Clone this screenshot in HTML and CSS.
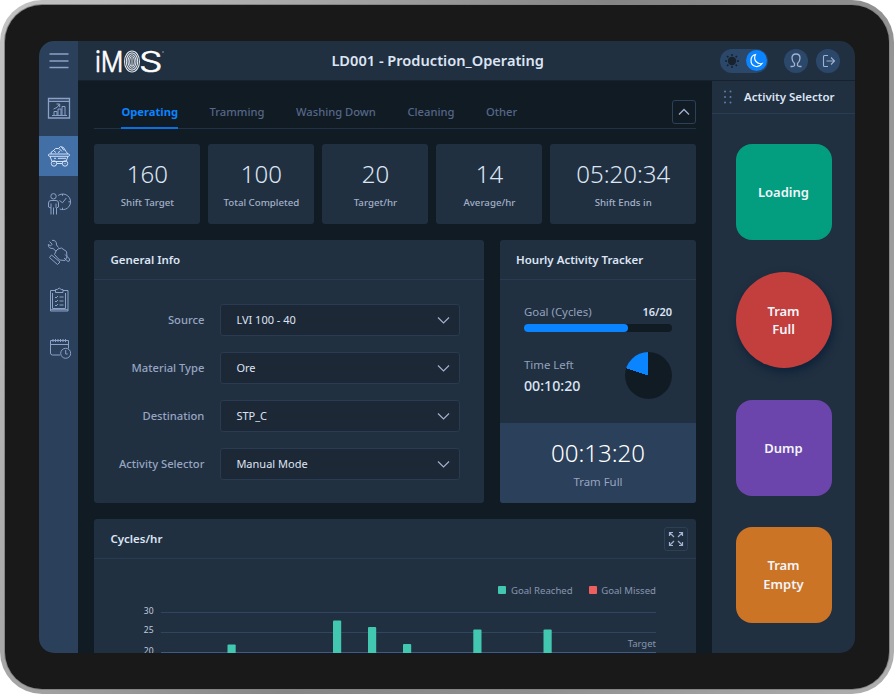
FILE: index.html
```
<!DOCTYPE html>
<html lang="en">

<head>
    <meta charset="utf-8">
    <title>iMOS</title>
    <link rel="stylesheet" href="styles.css">
</head>

<body>
    <div class="tablet">
        <div class="bezel">
            <div class="screen">
                <nav class="sidebar">
                    <a class="menu"><svg width="20" height="20" viewBox="0 0 20 20"><path d="M.5 3h19M.5 10h19M.5 16.500h19" stroke-width="1.500" /></svg></a>
                    <a><svg width="24" height="24" viewBox="0 0 24 24">
                        <path d="M1.500 2.500h21v19.500h-21zM1.500 5.300h21" stroke-width="1.300" />
                        <path d="M5 19.500h15M7 19.500v-4h3v4M11 19.500v-6.500h3v6.500M15 19.500V10.500h3v9M6.500 13q4.500-1 6-5M9.500 8h3.200v3.200" />
                    </svg></a>
                    <a class="active"><svg width="24" height="24" viewBox="0 0 24 24">
                        <path d="M1.500 11q0-1 1-1h19q1 0 1 1t-1 1.300h-19q-1 0-1-1.300zM3 12.300l2 5.200h14l2-5.200M4 10q-.5-2.500 2-3l2.500-2.500h3l2-2 3 1 2.500 4 2 2.500M7 7l2 1.500M12 4.500l3 3M14.500 3l2.500 3.500M11 8.500l2-1" />
                        <circle cx="7" cy="19.500" r="2.700" /><circle cx="18" cy="19.500" r="2.700" />
                        <path d="M9.700 19.500h5.600M7 14.300h2M11 14.300h8M6.600 19.500h.8M17.600 19.500h.8" />
                    </svg></a>
                    <a><svg width="24" height="24" viewBox="0 0 24 24">
                        <circle cx="6.500" cy="4.300" r="2.700" />
                        <path d="M4 22.500v-6.500l-2.500-1V11q0-2.500 2.500-2.500h5q2.500 0 2.500 2.500v4l-2 1v6.500M6.500 15.500v7M4 11.500v4.500M9 11.500v4.500" />
                        <path d="M11.200 3.500A7.800 7.800 0 1 1 12.700 17M15.500 2v1.800M23.200 9.800h-1.800M15.500 17.500v-1.800M12.500 8.500l3 2.300 3.800-4.800" />
                    </svg></a>
                    <a><svg width="24" height="26" viewBox="0 0 24 26">
                        <path d="M2.500 2.500l2.700 2.700-1.700 1.700-2.200-1.500q0 4.600 4.700 4l3.200 3M5 1.300q4.800-.3 4.500 4.700l2 2.500" />
                        <path d="M9 12l-1.500 3.500 5 5.500 5.500.5 2-3.500-.5-5.500-5-3.500-3.500 1zM4.500 16l8.500 7-2.500 2.500L2.500 18.500zM18 15.500l4.500 4.500q.5 2.500-1.500 2.500L17 19" />
                    </svg></a>
                    <a><svg width="24" height="26" viewBox="0 0 24 26">
                        <path d="M8.500 3.500H3.500v20.500h17.500V3.500h-5M8.500 2.500h1.700q2-3 4 0h1.800v3h-7.500zM5.500 6v15.500h13V6M3.500 22.700h17.500" />
                        <path d="M8 10l1 1 2-2M12.500 10h4M8 14l1 1 2-2M12.500 14h4M8 18l1 1 2-2M12.500 18h4" />
                    </svg></a>
                    <a><svg width="24" height="24" viewBox="0 0 24 24">
                        <path d="M13 19h-7.500q-2 0-2-2V4.500h18v8M3.500 8.500h18M6 3v3M8.500 3v3M11 3v3M13.500 3v3M16 3v3M18.500 3v3" />
                        <circle cx="18.700" cy="17.300" r="5" /><path d="M18.700 14v4h2" />
                    </svg></a>
                </nav>

                <div class="page">
                    <header class="topbar">
                        <svg class="logo" width="72" height="36" viewBox="0 0 72 36">
                            <text x="0" y="29" textLength="28.500" lengthAdjust="spacingAndGlyphs">iM</text>
                            <g class="print">
                                <ellipse cx="37" cy="18.500" rx="7.500" ry="10.500" />
                                <ellipse cx="37" cy="18.500" rx="5.700" ry="8.600" />
                                <ellipse cx="37" cy="18.500" rx="4" ry="6.700" />
                                <ellipse cx="37" cy="18.500" rx="2.300" ry="4.800" />
                                <path d="M37 15v8" />
                            </g>
                            <text x="44" y="29" textLength="23.500" lengthAdjust="spacingAndGlyphs">S</text>
                            <path d="M67 9h2" stroke="#8796ad" />
                        </svg>
                        <h1>LD001 - Production_Operating</h1>
                        <div class="tools">
                            <div class="toggle">
                                <svg width="24" height="24" viewBox="0 0 24 24">
                                    <circle cx="12" cy="12" r="4.200" fill="#17222d" stroke="none" />
                                    <path d="M12 5v2M12 17v2M5 12h2M17 12h2M7 7l1.400 1.400M15.600 15.600l1.400 1.400M17 7l-1.400 1.400M8.400 15.600L7 17" stroke="#17222d" stroke-width="1.500" />
                                </svg>
                                <span class="knob"><svg width="21" height="21" viewBox="0 0 21 21"><path d="M9.500 4.500Q5 5.500 5 10.500t5 6q3.500.5 6-3-3.500 1-6-2t-.5-7z" stroke="#fff" stroke-width="1.200" /></svg></span>
                            </div>
                            <span class="round"><svg width="24" height="24" viewBox="0 0 24 24"><path d="M6.500 17.500h1.500q2 0 2.500-1v-2q-2.500-2-2.500-5.500Q8 5 12 5T16 9q0 3.500-2.500 5.500v2q.5 1 2.500 1h1.500" stroke-width="1.300" /></svg></span>
                            <span class="round"><svg width="24" height="24" viewBox="0 0 24 24"><path d="M12 6.500H8.500q-1 0-1 1v9q0 1 1 1H12M10.500 12h8M15 8.500l3.500 3.500-3.500 3.500" stroke-width="1.100" /></svg></span>
                        </div>
                    </header>

                    <div class="body">
                        <main>
                            <div class="tabs">
                                <a class="current">Operating</a>
                                <a>Tramming</a>
                                <a>Washing Down</a>
                                <a>Cleaning</a>
                                <a>Other</a>
                                <button class="box-btn"><svg width="14" height="14" viewBox="0 0 14 14"><path d="M2 9.500l5-5 5 5" stroke-width="1.300" /></svg></button>
                            </div>

                            <div class="stats">
                                <div class="stat"><b>160</b><span>Shift Target</span></div>
                                <div class="stat"><b>100</b><span>Total Completed</span></div>
                                <div class="stat"><b>20</b><span>Target/hr</span></div>
                                <div class="stat"><b>14</b><span>Average/hr</span></div>
                                <div class="stat wide"><b>05:20:34</b><span>Shift Ends in</span></div>
                            </div>

                            <div class="row">
                                <section class="card info">
                                    <h2>General Info</h2>
                                    <div class="fields">
                                        <label>Source</label>
                                        <div class="select">LVI 100 - 40<svg width="14" height="14" viewBox="0 0 14 14"><path d="M1 4.500L6.500 10 12 4.500" /></svg></div>
                                        <label>Material Type</label>
                                        <div class="select">Ore<svg width="14" height="14" viewBox="0 0 14 14"><path d="M1 4.500L6.500 10 12 4.500" /></svg></div>
                                        <label>Destination</label>
                                        <div class="select">STP_C<svg width="14" height="14" viewBox="0 0 14 14"><path d="M1 4.500L6.500 10 12 4.500" /></svg></div>
                                        <label>Activity Selector</label>
                                        <div class="select">Manual Mode<svg width="14" height="14" viewBox="0 0 14 14"><path d="M1 4.500L6.500 10 12 4.500" /></svg></div>
                                    </div>
                                </section>

                                <section class="card tracker">
                                    <h2>Hourly Activity Tracker</h2>
                                    <div class="goal">
                                        <div class="goal-text"><span>Goal (Cycles)</span><b>16/20</b></div>
                                        <div class="progress"><div style="width: 70.5%"></div></div>
                                        <div class="time">
                                            <div><span>Time Left</span><b>00:10:20</b></div>
                                            <i class="pie"></i>
                                        </div>
                                    </div>
                                    <div class="elapsed"><b>00:13:20</b><span>Tram Full</span></div>
                                </section>
                            </div>

                            <section class="card cycles">
                                <h2>Cycles/hr
                                    <button class="box-btn"><svg width="16" height="16" viewBox="0 0 16 16"><path d="M6 6L1.500 1.500M1.500 5V1.500H5M10 6l4.500-4.500M11 1.500h3.500V5M6 10l-4.500 4.500M1.500 11v3.500H5M10 10l4.500 4.500M14.500 11v3.500H11" stroke-width="1.200" /></svg></button>
                                </h2>
                                <div class="legend"><span><i class="reached"></i>Goal Reached</span><span><i class="missed"></i>Goal Missed</span></div>
                                <svg class="chart" width="520" height="48" viewBox="0 0 520 48">
                                    <g class="grid"><path d="M25 6.500h495M25 26.500h495" /><path class="target" d="M25 46.500h495" /></g>
                                    <g class="axis"><text x="17.500" y="8">30</text><text x="17.500" y="27">25</text><text x="17.500" y="48">20</text></g>
                                    <g class="bars">
                                        <rect x="91.500" y="38.500" width="8.200" height="20" rx="1" />
                                        <rect x="197" y="14.500" width="8.200" height="50" rx="1" />
                                        <rect x="232" y="21" width="8.200" height="50" rx="1" />
                                        <rect x="267" y="38" width="8.200" height="20" rx="1" />
                                        <rect x="337.300" y="23.400" width="8.200" height="50" rx="1" />
                                        <rect x="407.500" y="23.400" width="8.200" height="50" rx="1" />
                                    </g>
                                    <text class="label" x="520" y="41">Target</text>
                                </svg>
                            </section>
                        </main>

                        <aside>
                            <h3><svg width="10" height="14" viewBox="0 0 10 14"><path d="M2 1.500h.01M7.500 1.500h.01M2 7h.01M7.500 7h.01M2 12.500h.01M7.500 12.500h.01" /></svg>Activity Selector</h3>
                            <button class="loading">Loading</button>
                            <button class="full">Tram<br>Full</button>
                            <button class="dump">Dump</button>
                            <button class="empty">Tram<br>Empty</button>
                        </aside>
                    </div>
                </div>
            </div>
        </div>
    </div>
</body>

</html>
```
FILE: styles.css
```
* {
    box-sizing: border-box;
}

body {
    margin: 0;
    background: #fff;
    font-family: "Noto Sans", sans-serif;
    font-size: 11px;
    color: #dde4f3;
}

h1, h2, h3 {
    margin: 0;
    font-weight: 600;
}

button {
    padding: 0;
    border: 0;
    font: inherit;
}

svg {
    fill: none;
    stroke: #a3b0cf;
    flex-shrink: 0;
}

.tablet {
    width: 894px;
    height: 694px;
    padding: 5px;
    border-radius: 42px;
    background: linear-gradient(115deg, #c4c4c4 0%, #a8a8a8 25%, #858585 50%, #8e8e8e 70%, #b0b0b0 100%);
}

.bezel {
    height: 684px;
    padding: 36px 34px;
    border-radius: 37px;
    background: #191919;
    box-shadow: 0 0 0 1px #858585;
}

.screen {
    display: flex;
    height: 612.4px;
    border-radius: 15px;
    overflow: hidden;
    background: #111b23;
}

/* left navigation */
.sidebar {
    width: 39.4px;
    flex-shrink: 0;
    display: flex;
    flex-direction: column;
    gap: 8px;
    background: #2b405b;
}

.sidebar a {
    height: 40px;
    display: flex;
    align-items: center;
    justify-content: center;
}

.sidebar svg {
    stroke: #8ba1c7;
}

.sidebar .menu {
    height: 39px;
}

.sidebar .active {
    background: #426fa5;
}

.sidebar .active svg {
    stroke: #d3e2fa;
}

.page {
    flex: 1;
    min-width: 0;
}

.topbar {
    height: 40px;
    padding: 0 15px 0 17px;
    display: flex;
    align-items: center;
    background: #203041;
    border-bottom: 1px solid #16222e;
}

.logo text {
    font: 300 28px Inter, sans-serif;
    fill: #fff;
    stroke: #fff;
    stroke-width: .6;
}

.print {
    stroke: #dce2ea;
    stroke-width: 1.1;
}

h1 {
    margin-left: 164px;
    padding-bottom: 2px;
    font-size: 14.6px;
}

.tools {
    display: flex;
    gap: 8px;
    margin-left: auto;
}

.toggle {
    width: 48px;
    height: 24px;
    margin-right: 8px;
    display: flex;
    align-items: center;
    border-radius: 12px;
    background: #2b486b;
}

.knob {
    width: 21px;
    height: 21px;
    margin-left: 1.5px;
    border-radius: 50%;
    background: #0a84ff;
}

.knob svg {
    display: block;
}

.round {
    width: 24px;
    height: 24px;
    border-radius: 50%;
    background: #2b486b;
}

.body {
    display: flex;
    height: 573px;
}

main {
    flex: 1;
    min-width: 0;
    padding: 19px 16px 0;
}

/* tabs */
.tabs {
    height: 29px;
    padding-left: 27px;
    display: flex;
    gap: 31.6px;
    border-bottom: 1px solid #203148;
    font-size: 11.2px;
    font-weight: 500;
    color: #56678a;
}

.tabs a {
    height: 29px;
    line-height: 24px;
}

.tabs .current {
    color: #0a84ff;
    font-weight: 700;
    border-bottom: 2px solid #0a6fe0;
}

.box-btn {
    width: 24px;
    height: 24px;
    margin-left: auto;
    display: flex;
    align-items: center;
    justify-content: center;
    border: 1px solid #2b4059;
    border-radius: 3px;
    background: none;
}

/* numbers */
.stats {
    display: flex;
    gap: 8px;
    margin: 15px 0 16px;
}

.stat {
    width: 106px;
    height: 80px;
    padding-top: 13px;
    border-radius: 3px;
    background: #203041;
    text-align: center;
}

.stat.wide {
    width: auto;
    flex: 1;
}

.stat b, .elapsed b {
    display: block;
    font-size: 24px;
    font-weight: 300;
    line-height: 34px;
}

.stat span {
    display: block;
    margin-top: 5px;
    font-size: 9.7px;
    line-height: 14px;
    font-weight: 500;
    color: #a3b0c8;
}

.row {
    display: flex;
    gap: 16px;
}

.card {
    border-radius: 3px;
    background: #203041;
}

.card h2 {
    height: 40px;
    padding: 0 16px;
    font-size: 11.5px;
    line-height: 39px;
    border-bottom: 1px solid #283b50;
}

.info {
    flex: 1;
    height: 263px;
}

.fields {
    display: grid;
    grid-template-columns: 110px 240px;
    column-gap: 16px;
    row-gap: 16px;
    padding: 24px 0 0;
    align-items: center;
}

.fields label {
    padding-bottom: 1px;
    text-align: right;
    font-size: 11.2px;
    font-weight: 500;
    color: #98a5c2;
}

.select {
    height: 31.9px;
    padding: 0 8px 1px 15px;
    display: flex;
    align-items: center;
    justify-content: space-between;
    border: 1px solid #283b52;
    border-radius: 3px;
    background: #1d2836;
}

.select svg {
    margin-top: 1px;
    stroke-width: 1.2;
}

.tracker {
    width: 196px;
    display: flex;
    flex-direction: column;
    overflow: hidden;
}

.goal {
    flex: 1;
    padding: 24px 24px 0;
    color: #94a1bc;
}

.goal span {
    font-size: 11.4px;
}

.goal-text {
    display: flex;
    justify-content: space-between;
    line-height: 16px;
}

.goal b {
    font-weight: 600;
    color: #dde4f3;
}

.progress {
    height: 8px;
    margin-top: 4px;
    border-radius: 4px;
    background: #111b23;
}

.progress div {
    height: 8px;
    border-radius: 4px;
    background: #0a84ff;
}

.time {
    display: flex;
    justify-content: space-between;
    margin-top: 20px;
}

.time span {
    display: block;
    margin-top: 5px;
    line-height: 16px;
}

.time b {
    display: block;
    margin-top: 2px;
    font-size: 14.2px;
    font-weight: 500;
    line-height: 22px;
}

.pie {
    width: 47px;
    height: 47px;
    border-radius: 50%;
    background: conic-gradient(#111b23 80%, #0a84ff 0);
}

.elapsed {
    height: 80px;
    padding-top: 13px;
    text-align: center;
    background: #2b405b;
}

.elapsed b {
    color: #fff;
}

.elapsed span {
    display: block;
    margin-top: 4px;
    font-size: 11.4px;
    line-height: 15px;
    color: #98a5c2;
}

/* chart */
.cycles {
    height: 150px;
    margin-top: 16px;
}

.cycles h2 {
    display: flex;
    align-items: center;
    padding-right: 8px;
    line-height: 42px;
}

.legend {
    margin: 23px 40px 0;
    display: flex;
    justify-content: flex-end;
    gap: 16px;
    font-size: 9.6px;
    line-height: 18px;
    color: #8895ae;
}

.legend i {
    display: inline-block;
    width: 8px;
    height: 8px;
    margin-right: 4.5px;
    border-radius: 1px;
}

.reached {
    background: #42c8b0;
}

.missed {
    background: #ee6060;
}

.chart {
    display: block;
    margin: 6px 40px 0 auto;
}

.chart text {
    font-size: 8.5px;
    fill: #c2cbdc;
    stroke: none;
    text-anchor: end;
}

.chart .label {
    font-size: 9.5px;
    fill: #8895ae;
}

.grid {
    stroke: #2f4560;
}

.target {
    stroke: #3d5a8c;
}

.bars {
    fill: #42c8b0;
    stroke: none;
}

/* right panel */
aside {
    width: 143px;
    display: flex;
    flex-direction: column;
    align-items: center;
    background: #203041;
}

aside h3 {
    width: 100%;
    height: 33px;
    padding: 0 0 1px 11px;
    display: flex;
    align-items: center;
    gap: 11px;
    font-size: 11.5px;
    border-bottom: 1px solid #2a3c54;
}

aside h3 svg {
    stroke: #5f7bab;
    stroke-width: 2;
    stroke-linecap: round;
}

aside button {
    width: 96px;
    height: 96px;
    margin-top: 31.8px;
    border-radius: 16px;
    font-size: 13px;
    font-weight: 600;
    line-height: 18px;
    color: #f3f4fa;
    flex-shrink: 0;
}

aside h3 + button {
    margin-top: 30px;
}

.loading {
    background: #039e80;
}

.full {
    border-radius: 50%;
    background: #c23f3d;
    box-shadow: 2px 4px 8px #0d2138;
}

.dump {
    background: #6b45ab;
}

.empty {
    line-height: 19px;
    background: #cc7425;
}
```
